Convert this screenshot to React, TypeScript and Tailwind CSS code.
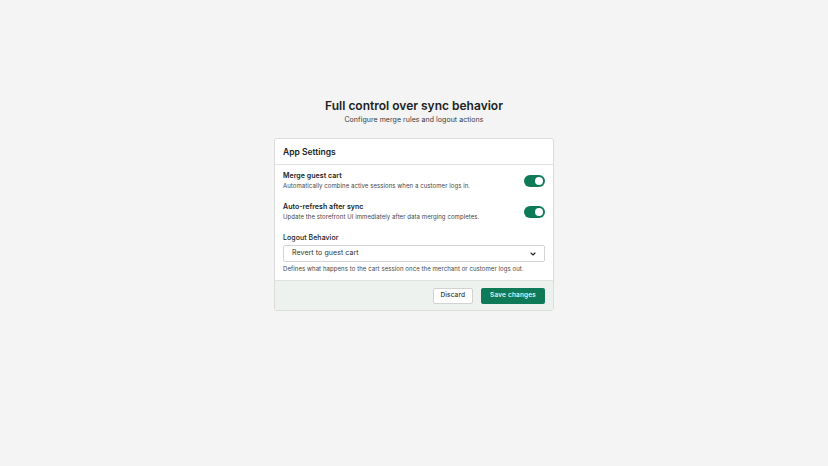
import { useState } from "react";

function Toggle({ on, onChange }: { on: boolean; onChange: () => void }) {
  return (
    <button
      type="button"
      onClick={onChange}
      className={`flex h-[12px] w-[21px] shrink-0 items-center rounded-full p-[2px] ${
        on ? "justify-end bg-[#0f7a58]" : "justify-start bg-[#c9cccf]"
      }`}
    >
      <span className="block h-[8px] w-[8px] rounded-full bg-white" />
    </button>
  );
}

export default function App() {
  const [merge, setMerge] = useState(true);
  const [refresh, setRefresh] = useState(true);

  return (
    <div className="flex min-h-[466px] w-full flex-col items-center bg-[#f4f4f4] pt-[98px] font-['Inter',sans-serif] text-[#202223]">
      <h1 className="text-[12px] font-semibold leading-[16px]">
        Full control over sync behavior
      </h1>
      <p className="mt-[1px] text-[7px] leading-[10px] tracking-[0.05px] text-[#3a3a3a]">
        Configure merge rules and logout actions
      </p>

      <section className="mt-[13px] w-[280px] overflow-hidden rounded-[3px] border border-[#dcdcdc] bg-white">
        <div className="border-b border-[#e1e1e1] px-[8px] pb-[6px] pt-[7px]">
          <h2 className="text-[8.5px] font-semibold leading-[12px]">App Settings</h2>
        </div>

        <div className="flex flex-col px-[8px] pt-[6px]">
          <div className="flex items-center justify-between">
            <div>
              <div className="text-[7px] font-semibold leading-[10px] tracking-[0.05px]">Merge guest cart</div>
              <div className="text-[6px] leading-[9px] tracking-[0.08px] text-[#444]">
                Automatically combine active sessions when a customer logs in.
              </div>
            </div>
            <Toggle on={merge} onChange={() => setMerge(!merge)} />
          </div>

          <div className="mt-[12px] flex items-center justify-between">
            <div>
              <div className="text-[7px] font-semibold leading-[10px] tracking-[0.05px]">Auto-refresh after sync</div>
              <div className="text-[6px] leading-[9px] tracking-[0.08px] text-[#444]">
                Update the storefront UI immediately after data merging completes.
              </div>
            </div>
            <Toggle on={refresh} onChange={() => setRefresh(!refresh)} />
          </div>

          <div className="mt-[12px] text-[7px] font-medium leading-[10px] tracking-[0.05px]">Logout Behavior</div>
          <div className="mt-[2px] flex h-[17px] items-center justify-between rounded-[2px] border border-[#d4d4d4] bg-white pl-[8px] pr-[7px]">
            <span className="text-[7px] tracking-[0.08px] text-[#303030]">Revert to guest cart</span>
            <svg width="8" height="8" viewBox="0 0 24 24" fill="none" stroke="#222" strokeWidth="3.2" strokeLinecap="round" strokeLinejoin="round">
              <path d="M6 9l6 6 6-6" />
            </svg>
          </div>
          <p className="mt-[2px] pb-[7px] text-[6px] leading-[9px] tracking-[0.08px] text-[#444]">
            Defines what happens to the cart session once the merchant or customer logs out.
          </p>
        </div>

        <div className="flex justify-end gap-[8px] border-t border-[#e1e1e1] bg-[#eef2ef] px-[8px] pb-[6px] pt-[7px]">
          <button
            type="button"
            className="h-[16px] rounded-[2px] border border-[#d2d2d2] bg-white px-[7px] text-[6.5px] font-medium tracking-[0.1px] text-[#303030]"
          >
            Discard
          </button>
          <button
            type="button"
            className="h-[16px] rounded-[2px] bg-[#0f7a58] px-[9px] text-[6.5px] font-medium tracking-[0.2px] text-white"
          >
            Save changes
          </button>
        </div>
      </section>
    </div>
  );
}
